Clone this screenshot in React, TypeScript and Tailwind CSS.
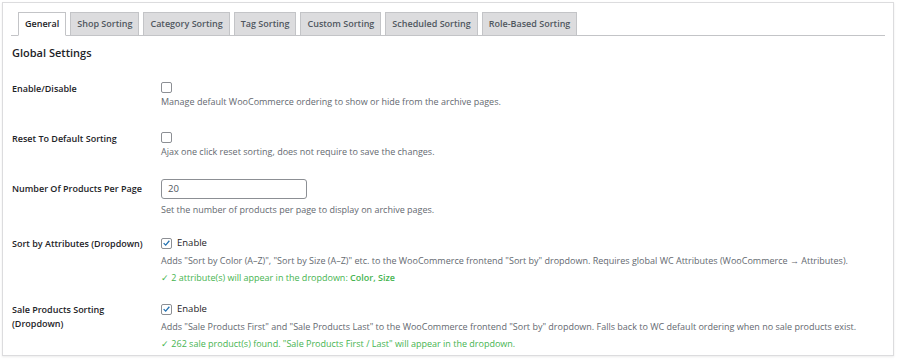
import React from "react";

const tabs = [
  "General",
  "Shop Sorting",
  "Category Sorting",
  "Tag Sorting",
  "Custom Sorting",
  "Scheduled Sorting",
  "Role-Based Sorting",
];

const Check = ({ checked }: { checked?: boolean }) => (
  <span className="inline-flex h-[11px] w-[11px] shrink-0 items-center justify-center rounded-[2px] border border-[#8c8f94] bg-white">
    {checked && (
      <svg viewBox="0 0 12 12" className="h-[10px] w-[10px]">
        <path d="M2.2 6.2 L4.9 8.8 L9.8 3" fill="none" stroke="#2271b1" strokeWidth="1.7" />
      </svg>
    )}
  </span>
);

const Row = ({
  label,
  children,
  className = "",
}: {
  label: React.ReactNode;
  children: React.ReactNode;
  className?: string;
}) => (
  <div className={`flex ${className}`}>
    <div className="w-[149px] shrink-0 text-[9px] font-semibold leading-[14px] text-[#1d2327]">{label}</div>
    <div className="flex flex-col">{children}</div>
  </div>
);

export default function App() {
  return (
    <div className="h-[360px] w-[898px] bg-white p-[2px]" style={{ fontFamily: '"Open Sans", "Noto Sans", sans-serif' }}>
      <div className="h-[354px] w-[892px] border border-[#dcdcde] bg-white shadow-[0_1px_2px_rgba(0,0,0,0.08)]">
        {/* tabs */}
        <div className="mx-[8px] mt-[9px] flex gap-[4px] border-b border-[#c3c4c7] pl-[7px]">
          {tabs.map((t, i) => (
            <div
              key={t}
              className={`-mb-px flex h-[24px] items-center border border-[#c3c4c7] px-[6px] text-[9px] font-semibold ${
                i === 0 ? "border-b-white bg-white text-[#1d2327]" : "bg-[#dcdcde] text-[#50575e]"
              }`}
            >
              {t}
            </div>
          ))}
        </div>

        <div className="pl-[9px]">
          <div className="mt-[8px] text-[11px] font-semibold leading-[18px] text-[#1d2327]">Global Settings</div>

          <Row label={<div className="pt-[1px]">Enable/Disable</div>} className="mt-[19px] items-start">
            <div className="flex h-[13px] items-center">
              <Check />
            </div>
            <div className="mt-[1px] text-[9px] leading-[14px] text-[#646970]">
              Manage default WooCommerce ordering to show or hide from the archive pages.
            </div>
          </Row>

          <Row label={<div className="pt-[1px]">Reset To Default Sorting</div>} className="mt-[22px]">
            <div className="flex h-[13px] items-center">
              <Check />
            </div>
            <div className="mt-[1px] text-[9px] leading-[14px] text-[#646970]">
              Ajax one click reset sorting, does not require to save the changes.
            </div>
          </Row>

          <Row label={<div className="pt-[3px]">Number Of Products Per Page</div>} className="mt-[20px]">
            <div className="flex h-[20px] w-[146px] items-center rounded-[3px] border border-[#8c8f94] px-[6px] text-[9.5px] text-[#50575e]">
              20
            </div>
            <div className="mt-[4px] text-[9px] leading-[14px] text-[#646970]">
              Set the number of products per page to display on archive pages.
            </div>
          </Row>

          <Row label={<div className="pt-[1px]">Sort by Attributes (Dropdown)</div>} className="mt-[19px]">
            <div className="flex h-[14px] items-center gap-[5px] text-[9.5px] text-[#1d2327]">
              <Check checked />
              <span>Enable</span>
            </div>
            <div className="mt-[2px] text-[9px] leading-[17px] text-[#646970]">
              Adds "Sort by Color (A–Z)", "Sort by Size (A–Z)" etc. to the WooCommerce frontend "Sort by" dropdown. Requires global WC Attributes (WooCommerce → Attributes).
            </div>
            <div className="text-[9px] leading-[17px] text-[#46b450]">
              ✓ 2 attribute(s) will appear in the dropdown: <span className="font-semibold">Color, Size</span>
            </div>
          </Row>

          <Row
            label={
              <div className="pt-[1px]">
                Sale Products Sorting
                <br />
                (Dropdown)
              </div>
            }
            className="mt-[16px]"
          >
            <div className="flex h-[14px] items-center gap-[5px] text-[9.5px] text-[#1d2327]">
              <Check checked />
              <span>Enable</span>
            </div>
            <div className="mt-[2px] text-[9px] leading-[17px] text-[#646970]">
              Adds "Sale Products First" and "Sale Products Last" to the WooCommerce frontend "Sort by" dropdown. Falls back to WC default ordering when no sale products exist.
            </div>
            <div className="text-[9px] leading-[17px] text-[#46b450]">
              ✓ 262 sale product(s) found. "Sale Products First / Last" will appear in the dropdown.
            </div>
          </Row>
        </div>
      </div>
    </div>
  );
}
